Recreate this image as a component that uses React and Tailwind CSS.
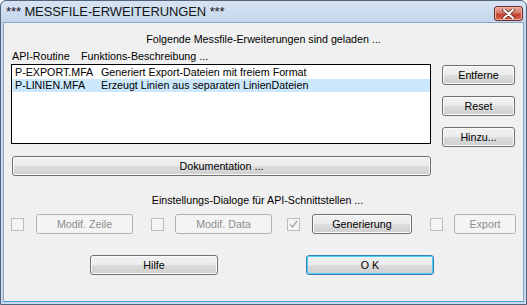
import React from 'react'

const font = { fontFamily: '"Liberation Sans", Arial, sans-serif' }

function Btn({ children, className = '', disabled, primary }) {
  let look = 'border-[#707070] bg-[linear-gradient(#f2f2f2_0%,#ebebeb_50%,#dddddd_50%,#cfcfcf_100%)] shadow-[inset_0_0_0_1px_#fbfbfb] text-black'
  if (disabled) look = 'border-[#adb2b5] bg-[#f4f4f4] text-[#8d8d8d]'
  if (primary) look = 'border-[#3c7fb1] bg-[linear-gradient(#f2f2f2_0%,#ebebeb_50%,#dddddd_50%,#cfcfcf_100%)] shadow-[inset_0_0_0_1px_#48d0f8] text-black'
  return (
    <div className={`flex items-center justify-center rounded-[3px] border text-[10.7px] leading-none ${look} ${className}`}>
      {children}
    </div>
  )
}

function Check({ checked }) {
  return (
    <div className="flex h-[13px] w-[13px] items-center justify-center border border-[#bcbcbc] bg-[#f4f4f4]">
      {checked && (
        <svg width="9" height="9" viewBox="0 0 9 9">
          <path d="M1 4.5 L3.5 7 L8 1" fill="none" stroke="#a0a8b4" strokeWidth="1.4" />
        </svg>
      )}
    </div>
  )
}

export default function App() {
  return (
    <div style={font} className="flex h-[305px] w-[527px] flex-col overflow-hidden rounded-t-[6px] border border-[#55647a] bg-[linear-gradient(#d6e3f3,#c3d6ed_22px,#c9daef)]">
      {/* title bar */}
      <div className="flex h-[21px] shrink-0 items-center justify-between pl-[5px] pr-[3px]">
        <span className="text-[13px] tracking-[-0.1px] text-[#151515]">*** MESSFILE-ERWEITERUNGEN ***</span>
        <div className="mt-[4px] flex h-[15px] w-[29px] items-center justify-center rounded-[3px] border border-[#6d2a20] bg-[linear-gradient(#e9a99c_0%,#d77a6a_45%,#c2412e_55%,#d2654f_100%)] shadow-[inset_0_0_0_1px_#eab3a8]">
          <svg width="13" height="10" viewBox="0 0 13 10">
            <path d="M2 1 L11 9 M11 1 L2 9" stroke="#5a2a24" strokeWidth="3.6" strokeLinecap="round" />
            <path d="M2 1 L11 9 M11 1 L2 9" stroke="#ffffff" strokeWidth="2" strokeLinecap="round" />
          </svg>
        </div>
      </div>

      {/* client area */}
      <div className="mx-[2px] mb-[2px] flex-1 border border-[#8aa4c6] border-b-[#3ba0d8] bg-[#f0f0f0] text-[10.7px] text-black">
        <div className="pt-[10px] text-center leading-[13px]">Folgende Messfile-Erweiterungen sind geladen ...</div>

        <div className="mt-[4px] flex gap-[11px] pl-[7px]">
          <div className="w-[420px]">
            <div className="flex h-[13px] leading-[13px]">
              <span className="w-[70px] pl-[1px]">API-Routine</span>
              <span>Funktions-Beschreibung ...</span>
            </div>
            <div className="mt-[1px] h-[80px] border border-black bg-white pt-[1px]">
              <div className="flex h-[13px] leading-[13px]">
                <span className="w-[89px] pl-[3px]">P-EXPORT.MFA</span>
                <span>Generiert Export-Dateien mit freiem Format</span>
              </div>
              <div className="flex h-[13px] bg-[#cce8ff] leading-[13px]">
                <span className="w-[89px] pl-[3px]">P-LINIEN.MFA</span>
                <span>Erzeugt Linien aus separaten LinienDateien</span>
              </div>
            </div>
          </div>
          <div className="flex flex-col gap-[11px] pt-[15px]">
            <Btn className="h-[20px] w-[73px]">Entferne</Btn>
            <Btn className="h-[20px] w-[73px]">Reset</Btn>
            <Btn className="h-[20px] w-[73px]">Hinzu...</Btn>
          </div>
        </div>

        <Btn className="ml-[8px] mt-[9px] h-[20px] w-[419px]">Dokumentation ...</Btn>

        <div className="mt-[18px] pr-[12px] text-center leading-[13px]">Einstellungs-Dialoge für API-Schnittstellen ...</div>

        <div className="mt-[7px] flex items-center pl-[7px]">
          <Check />
          <Btn disabled className="ml-[12px] h-[20px] w-[97px]">Modif. Zeile</Btn>
          <div className="ml-[18px]"><Check /></div>
          <Btn disabled className="ml-[11px] h-[20px] w-[97px]">Modif. Data</Btn>
          <div className="ml-[15px]"><Check checked /></div>
          <Btn className="ml-[12px] h-[20px] w-[100px]">Generierung</Btn>
          <div className="ml-[18px]"><Check /></div>
          <Btn disabled className="ml-[11px] h-[20px] w-[62px]">Export</Btn>
        </div>

        <div className="mt-[21px] flex pl-[86px]">
          <Btn className="h-[20px] w-[128px]">Hilfe</Btn>
          <Btn primary className="ml-[88px] h-[20px] w-[128px]">O K</Btn>
        </div>
      </div>
    </div>
  )
}
